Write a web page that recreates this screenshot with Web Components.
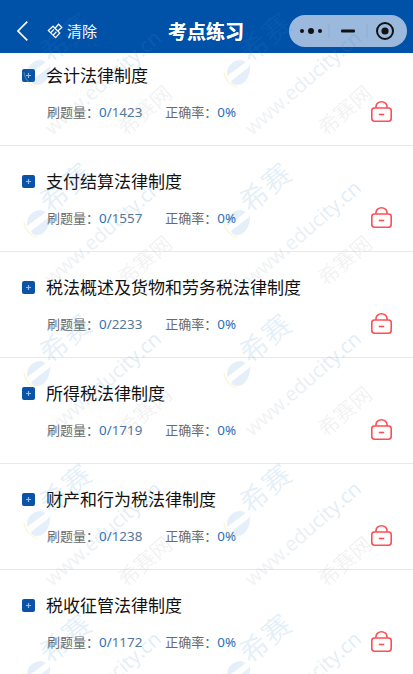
<!DOCTYPE html>
<html lang="zh"><head><meta charset="utf-8"><title>考点练习</title>
<style>html,body{margin:0;padding:0;background:#fff}</style></head>
<body>
<exam-page>
  <nav-bar slot="nav" heading="考点练习"></nav-bar>
  <topic-row name="会计法律制度" total="1423"></topic-row>
  <topic-row name="支付结算法律制度" total="1557"></topic-row>
  <topic-row name="税法概述及货物和劳务税法律制度" total="2233"></topic-row>
  <topic-row name="所得税法律制度" total="1719"></topic-row>
  <topic-row name="财产和行为税法律制度" total="1238"></topic-row>
  <topic-row name="税收征管法律制度" total="1172"></topic-row>
  <water-mark slot="mark"></water-mark>
</exam-page>
<script>
const FONT = '"Noto Sans CJK SC","Noto Sans",sans-serif';
class ExamPage extends HTMLElement{
  constructor(){super();this.attachShadow({mode:'open'}).innerHTML=`<style>
  :host{display:block;position:relative;width:413px;height:674px;overflow:hidden;background:#fff;font-family:${FONT}}
  .list{margin-top:-13px}
  </style><slot name="nav"></slot><div class="list"><slot></slot></div><slot name="mark"></slot>`;}
}
class NavBar extends HTMLElement{
  constructor(){super();this.attachShadow({mode:'open'}).innerHTML=`<style>
  :host{display:grid;grid-template-columns:1fr 76px 1fr;align-items:center;position:relative;z-index:2;height:53px;background:#0051a8;color:#fff;box-sizing:border-box;padding:9px 6px 0 17px}
  .left{display:flex;align-items:center}
  .left svg{display:block}
  .back{margin-right:19px}
  .clear{font-size:15px;line-height:20px;margin-left:4px}
  h1{margin:0 0 0 -6px;font-size:19px;line-height:26px;font-weight:700;color:#fff;white-space:nowrap;text-shadow:0 0 .6px #fff}
  .cap{justify-self:end;display:flex;align-items:center;width:118px;height:32px;border-radius:16px;background:#9bb9dc;position:relative}
  .cap svg{display:block}
  </style>
  <div class="left">
    <svg class="back" width="11" height="20" viewBox="0 0 11 20"><path d="M10.3 .6 1 10l9.3 9.4" fill="none" stroke="#fff" stroke-width="1.6"/></svg>
    <svg width="16" height="16" viewBox="0 0 16 16" fill="none" stroke="#fff" stroke-width="1.3"><path d="M6 3.2 12.8 10 8.6 14.6 1.4 7.6z"/><path d="M3.6 9.8 7 6.4M6 12.2 9.4 8.8"/><path d="M8 5.2 11.6 1.2 14.8 4.4 10.8 8"/></svg>
    <span class="clear">清除</span>
  </div>
  <h1></h1>
  <div class="cap">
    <svg width="118" height="32" viewBox="0 0 118 32">
      <g fill="#111"><circle cx="13" cy="16" r="2"/><circle cx="22" cy="16" r="3"/><circle cx="31" cy="16" r="2"/><rect x="52" y="14.6" width="14" height="2.8" rx="1"/><circle cx="96" cy="16" r="3.6"/></g>
      <circle cx="96" cy="16" r="8" fill="none" stroke="#111" stroke-width="2"/>
      <path d="M40 9v14M78 9v14" stroke="#8fadd2" stroke-width="1"/>
    </svg>
  </div>`;
  this.shadowRoot.querySelector('h1').textContent=this.getAttribute('heading');}
}
class TopicRow extends HTMLElement{
  constructor(){super();this.attachShadow({mode:'open'}).innerHTML=`<style>
  :host{display:block;box-sizing:border-box;height:106px;border-bottom:1px solid #e8e8e8;padding:22px 21px 0 22px}
  .title{display:flex;align-items:center;height:26px}
  .sq{width:13px;height:13px;border-radius:2px;background:#0b53a7;display:block;margin-right:11px;flex:none}
  .name{font-size:17px;line-height:26px;color:#111;margin-top:-1px}
  .meta{display:flex;align-items:center;justify-content:space-between;height:24px;margin-top:12px;padding-left:25px}
  .stats{display:flex;font-size:13px;line-height:24px;color:#6b6b6b}
  .stats b,.stats i{font-weight:400;font-style:normal;font-family:"Noto Sans",sans-serif;font-size:13.4px}
  .stats b{color:#2b6fb8}
  .stats i{color:#56779a}
  .s2{margin-left:23px}
  svg.lock{display:block;flex:none;margin-top:-1px}
  </style>
  <div class="title">
    <svg class="sq" viewBox="0 0 13 13"><path d="M6.5 4v5M4 6.5h5" stroke="#9dbbe0" stroke-width="1.2"/></svg>
    <span class="name"></span>
  </div>
  <div class="meta">
    <div class="stats"><span>刷题量：<b>0/</b><i class="t"></i></span><span class="s2">正确率：<b>0%</b></span></div>
    <svg class="lock" width="21" height="21" viewBox="0 0 21 21" fill="none" stroke="#ff4d55" stroke-width="1.6"><rect x=".8" y="7" width="19.4" height="13.2" rx="2.6"/><path d="M5 7V5.6a5.5 4.8 0 0 1 11 0V7"/><path d="M7.8 13.5h5.4" stroke-width="1.6"/></svg>
  </div>`;
  const s=this.shadowRoot;
  s.querySelector('.name').textContent=this.getAttribute('name');
  s.querySelector('.t').textContent=this.getAttribute('total');}
}
class WaterMark extends HTMLElement{
  constructor(){super();
    const tile=i=>`<svg width="200" height="150" viewBox="0 0 200 150">
      <defs><linearGradient id="g${i}" x1="0" x2="1"><stop offset="0" stop-color="#8a8f96" stop-opacity=".11"/><stop offset="1" stop-color="#3d8ccf" stop-opacity=".17"/></linearGradient></defs>
      <path d="M24 72a17 17 0 0 0 13 15" fill="none" stroke="#f0e070" stroke-opacity=".3" stroke-width="1.2"/>
      <path d="M27 76C26 66 33 60 41 60L46 62 27 76Z" fill="#2b86d0" fill-opacity=".13"/>
      <path d="M31 81 49 67 50 64C51 74 46 85 37 85 34 85 32 84 31 81Z" fill="#2b86d0" fill-opacity=".13"/>
      <text transform="translate(50 64) rotate(-40)" font-size="28" letter-spacing="1" font-family='"Noto Sans CJK SC",sans-serif' fill="#2f8ad4" fill-opacity=".15">希赛</text>
      <text transform="translate(52 136) rotate(-41)" font-size="20" font-family='"Open Sans",sans-serif' fill="url(#g${i})">www.educity.cn</text>
      <text transform="translate(126 137) rotate(-41)" font-size="21" font-family='"Noto Sans CJK SC",sans-serif' fill="#7d7d7d" fill-opacity=".1">希赛网</text>
    </svg>`;
    let h='';for(let i=0;i<10;i++)h+=tile(i);
    this.attachShadow({mode:'open'}).innerHTML=`<style>
    :host{display:block;position:absolute;inset:0;z-index:3;pointer-events:none;overflow:hidden}
    .grid{display:grid;grid-template-columns:repeat(2,200px);grid-auto-rows:150.3px}
    svg{display:block;overflow:visible}
    </style><div class="grid">${h}</div>`;
  }
}
customElements.define('exam-page',ExamPage);
customElements.define('nav-bar',NavBar);
customElements.define('topic-row',TopicRow);
customElements.define('water-mark',WaterMark);
</script>
</body></html>
